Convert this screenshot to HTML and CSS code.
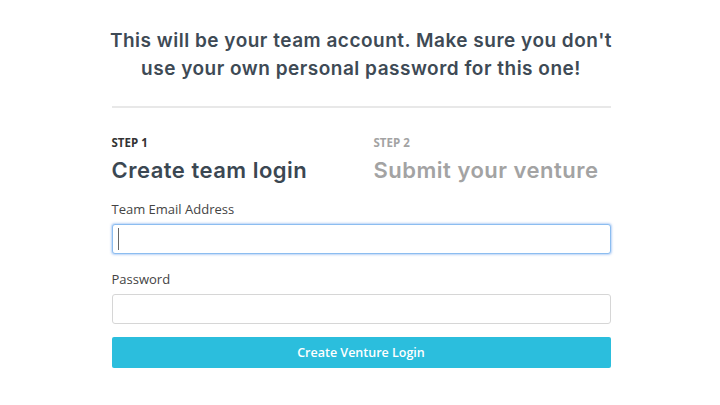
FILE: index.html
```html
<!DOCTYPE html>
<html>
<head>
<meta charset="utf-8">
<link rel="stylesheet" href="styles.css">
</head>
<body>
<main class="wrap">
  <p class="intro">This will be your team account. Make sure you don't use your own personal password for this one!</p>
  <hr class="divider">
  <div class="steps">
    <div class="step active">
      <div class="step-num">STEP 1</div>
      <div class="step-title">Create team login</div>
    </div>
    <div class="step">
      <div class="step-num">STEP 2</div>
      <div class="step-title">Submit your venture</div>
    </div>
  </div>
  <form class="form">
    <label class="field">
      <span class="label">Team Email Address</span>
      <span class="input focus"><span class="caret"></span></span>
    </label>
    <label class="field">
      <span class="label">Password</span>
      <span class="input"></span>
    </label>
    <div class="btn">Create Venture Login</div>
  </form>
</main>
</body>
</html>
```
FILE: styles.css
```css
html, body { margin: 0; padding: 0; background: #fff; }
.wrap {
  box-sizing: border-box;
  width: 499px;
  margin: 0 auto;
  padding-top: 27px;
  position: relative;
  left: 1px;
}
.intro {
  margin: 0 -4px;
  font-family: "Inter", sans-serif;
  font-weight: 600;
  font-size: 19px;
  letter-spacing: 0.5px;
  line-height: 28px;
  color: #3e4a55;
  text-align: center;
}
.divider {
  border: 0;
  border-top: 2px solid #e8e8e8;
  margin: 23px 0 0;
}
.steps {
  display: flex;
  margin-top: 28px;
}
.step { flex: 0 0 262px; }
.step + .step { flex: 1 1 auto; }
.step-num {
  font-family: "Open Sans", sans-serif;
  font-weight: bold;
  font-size: 11.5px;
  line-height: 14px;
  color: #333;
}
.step-title {
  font-family: "Inter", sans-serif;
  font-weight: 600;
  font-size: 22px;
  letter-spacing: 0.5px;
  line-height: 28px;
  margin-top: 6px;
  color: #3b4752;
  white-space: nowrap;
}
.step:not(.active) .step-num, .step:not(.active) .step-title { color: #a3a3a3; }
.form { margin-top: 16px; }
.field { display: block; margin-bottom: 16px; }
.label {
  display: block;
  font-family: "Open Sans", sans-serif;
  font-size: 13px;
  line-height: 18px;
  color: #444;
  margin-bottom: 6px;
}
.input {
  display: flex;
  align-items: center;
  height: 28px;
  border: 1px solid #d6d6d6;
  border-radius: 3px;
  background: #fff;
  padding-left: 5px;
}
.input.focus {
  border-color: #8cbdf0;
  box-shadow: 0 0 2px 1px rgba(120, 170, 240, 0.5);
}
.caret { width: 1px; height: 22px; background: #666; }
.btn {
  margin-top: -3px;
  height: 31px;
  border-radius: 2px;
  background: #2bbedd;
  color: #fff;
  font-family: "Open Sans", sans-serif;
  font-weight: 600;
  font-size: 12.5px;
  line-height: 31px;
  text-align: center;
}
```
